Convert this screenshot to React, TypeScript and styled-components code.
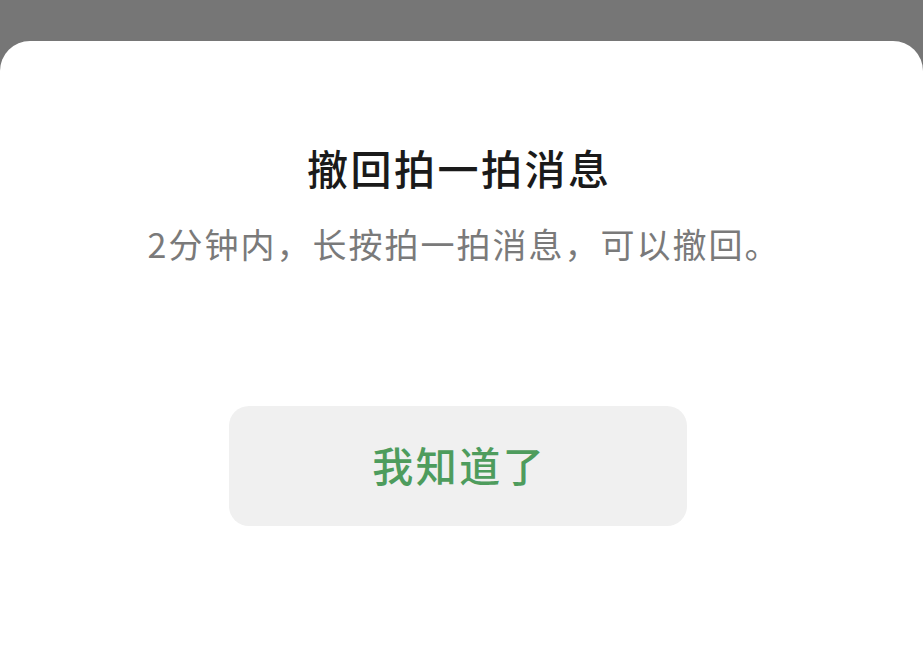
import React from "react";
import styled, { createGlobalStyle } from "styled-components";

const GlobalStyle = createGlobalStyle`
  html, body {
    margin: 0;
    padding: 0;
    background: #767676;
    font-family: "Noto Sans CJK SC", "Noto Sans", sans-serif;
  }
`;

const Page = styled.div`
  width: 923px;
  height: 657px;
  overflow: hidden;
  display: flex;
  flex-direction: column;
  background: #767676;
`;

const Sheet = styled.div`
  margin-top: 41px;
  flex: 1;
  background: #ffffff;
  border-radius: 30px 30px 0 0;
  display: flex;
  flex-direction: column;
  align-items: center;
  padding: 101px 7px 0 0;
`;

const Title = styled.h2`
  margin: 0;
  font-size: 41px;
  line-height: 50px;
  font-weight: 500;
  color: #1a1a1a;
  letter-spacing: 2.5px;
  text-indent: 2.5px;
`;

const Subtitle = styled.p`
  margin: 30px 0 0;
  font-size: 34px;
  line-height: 44px;
  color: #7a7a7a;
  letter-spacing: 2px;
  text-indent: 12px;
`;

const Button = styled.button`
  margin-top: 140px;
  width: 458px;
  height: 120px;
  padding: 0 0 5px;
  border: none;
  border-radius: 20px;
  background: #f0f0f0;
  color: #4e9c5d;
  font-family: inherit;
  font-size: 41px;
  font-weight: 500;
  letter-spacing: 2.5px;
  text-indent: 2.5px;
  cursor: pointer;
`;

export default function App() {
  return (
    <Page>
      <GlobalStyle />
      <Sheet>
        <Title>撤回拍一拍消息</Title>
        <Subtitle>2分钟内，长按拍一拍消息，可以撤回。</Subtitle>
        <Button>我知道了</Button>
      </Sheet>
    </Page>
  );
}
